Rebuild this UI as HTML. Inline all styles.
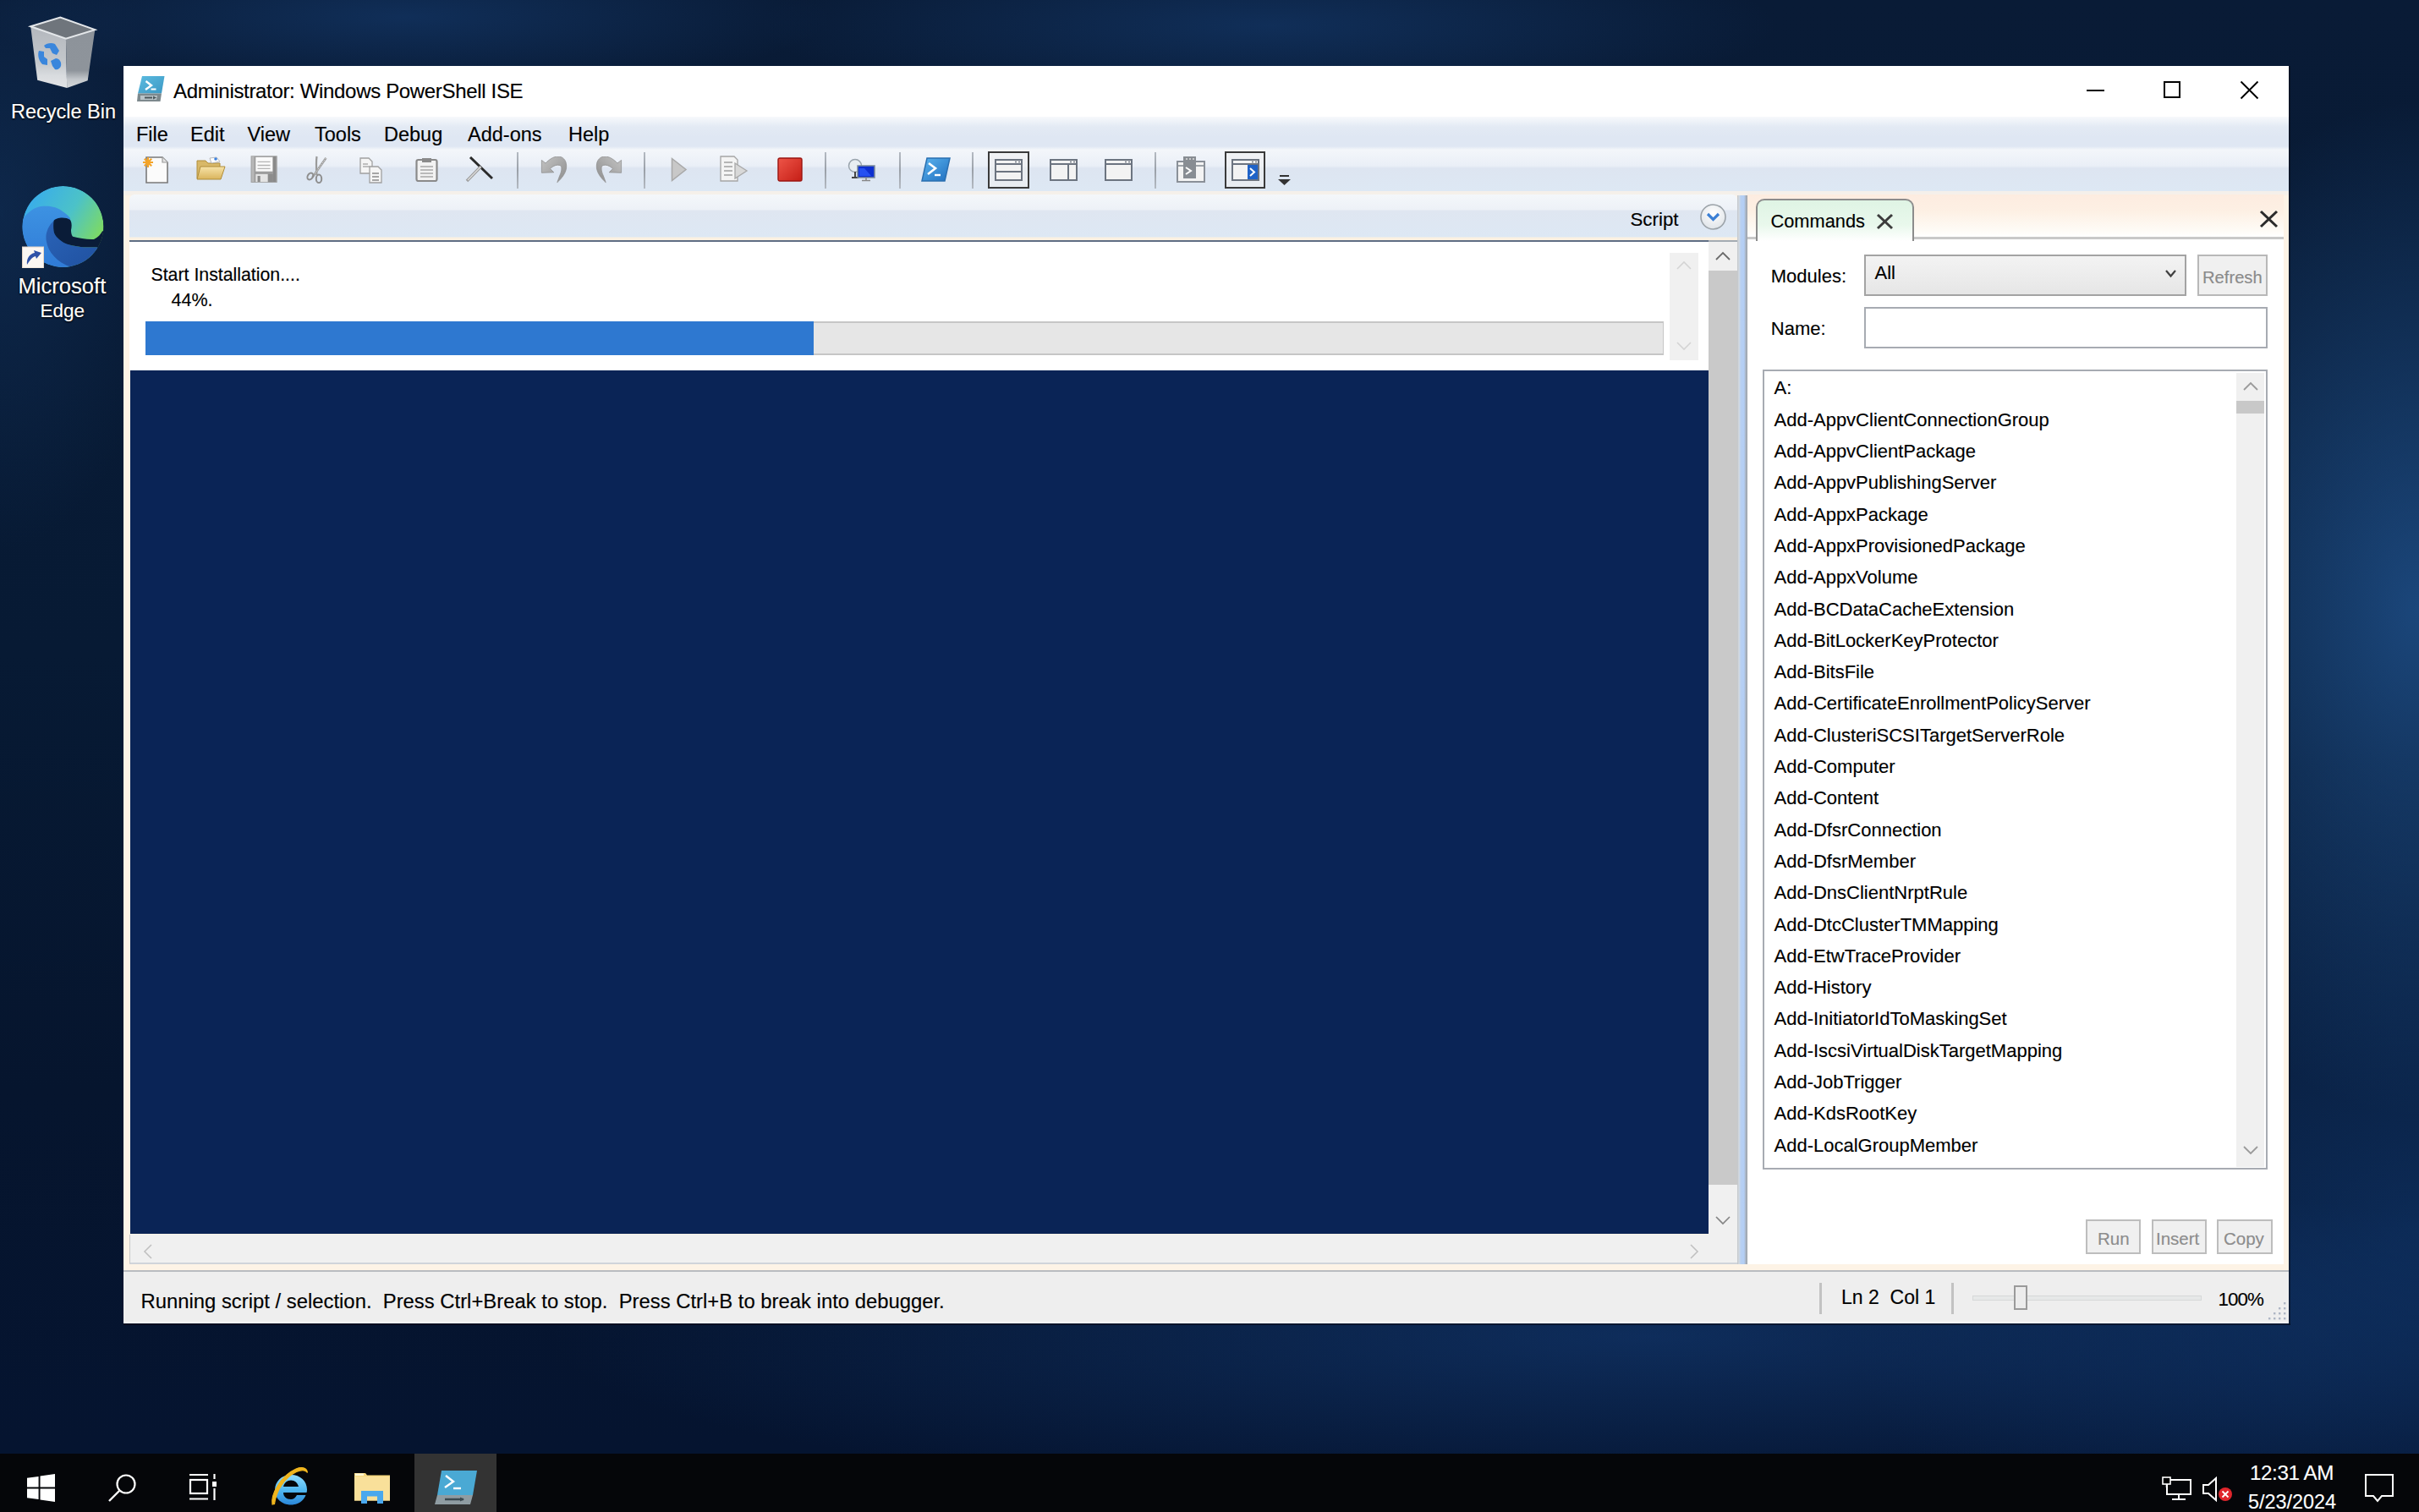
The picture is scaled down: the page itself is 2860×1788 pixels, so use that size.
<!DOCTYPE html>
<html><head><meta charset="utf-8">
<style>
*{margin:0;padding:0;box-sizing:border-box}
html,body{width:2860px;height:1788px;overflow:hidden}
body{position:relative;font-family:"Liberation Sans",sans-serif;background:#0a1e3c}
.a{position:absolute}
.t{position:absolute;white-space:nowrap;color:#000;line-height:1;-webkit-text-stroke:0.15px currentColor}
#bg{left:0;top:0;width:2860px;height:1719px;
background:
radial-gradient(ellipse 380px 600px at 2860px 720px, rgba(40,100,170,0.6), rgba(40,100,170,0) 100%),
radial-gradient(ellipse 700px 550px at 2860px 1450px, rgba(22,75,145,0.4), rgba(22,75,145,0) 100%),
radial-gradient(ellipse 1300px 200px at 1950px 1580px, rgba(25,75,145,0.45), rgba(25,75,145,0) 100%),
radial-gradient(ellipse 500px 90px at 480px 20px, rgba(25,70,130,0.45), rgba(25,70,130,0) 100%),
radial-gradient(ellipse 600px 100px at 1500px 30px, rgba(25,70,130,0.45), rgba(25,70,130,0) 100%),
radial-gradient(ellipse 200px 400px at 0px 250px, rgba(20,55,100,0.45), rgba(20,55,100,0) 100%),
linear-gradient(180deg,#091b36 0%,#071a34 45%,#06152e 75%,#051430 100%)}
#taskbar{left:0;top:1719px;width:2860px;height:69px;background:#050609}
#win{left:146px;top:78px;width:2560px;height:1487px;background:#fdf3e6}
#title{left:146px;top:78px;width:2560px;height:60px;background:#fff}
#menubar{left:146px;top:138px;width:2560px;height:88px;
background:linear-gradient(180deg,#f7f9fc 0px,#e3eaf4 12px,#dfe7f3 24px,#dfe7f3 35px,#f3f6fa 39px,#eaeff7 58px,#dde5f1 61px,#dde8f4 88px)}
#tbband{left:146px;top:226px;width:2560px;height:5px;background:#f5f0ea}
#scripthdr{left:153px;top:230px;width:1901px;height:54px;border-radius:6px 6px 0 0;
background:linear-gradient(180deg,#f4f7fa 0px,#edf1f7 18px,#dfe6f1 19px,#dde8f4 50px,#fbf1e2 51px,#fbf1e2 54px)}
#hdrline{left:153px;top:284px;width:1901px;height:2px;background:linear-gradient(90deg,#5f6e84 0,#5f6e84 1867px,#a4abb3 1867px)}
#editor{left:153px;top:286px;width:1867px;height:152px;background:#fff}
#console{left:154px;top:438px;width:1866px;height:1021px;background:#0a2456}
#vscroll{left:2020px;top:286px;width:34px;height:1175px;background:#f0f0f0}
#vthumb{left:2020px;top:320px;width:34px;height:1081px;background:#c9c9c9}
#hscroll{left:153px;top:1460px;width:1901px;height:35px;background:#f0f0f0;border-left:1px solid #c8c8c8;border-bottom:2px solid #d0d4da}
#splitter{left:2054px;top:231px;width:12px;height:1264px;background:linear-gradient(90deg,#bfc3c8 0,#d6dbe0 2px,#b7d0f2 4px,#b3cef5 8px,#a9b4c2 10px,#9aa0a8 12px)}
#cmdpane{left:2066px;top:231px;width:634px;height:1264px;background:#fff}
#cmdhdr{left:2066px;top:230px;width:634px;height:50px;background:linear-gradient(180deg,#fdece0 0%,#fdf0e4 40%,#fefbf6 85%,#ffffff 100%)}
#status{left:146px;top:1502px;width:2560px;height:63px;background:#eeeeee;border-top:2px solid #b9bcc0}
</style></head><body>
<div id="bg" class="a"></div>
<div id="taskbar" class="a"></div>
<div id="win" class="a"></div>
<div id="title" class="a"></div>
<div id="menubar" class="a"></div>
<div id="tbband" class="a"></div>
<div id="scripthdr" class="a"></div>
<div id="hdrline" class="a"></div>
<div id="editor" class="a"></div>
<div id="console" class="a"></div>
<div id="vscroll" class="a"></div>
<div id="vthumb" class="a"></div>
<div id="hscroll" class="a"></div>
<div id="splitter" class="a"></div>
<div id="cmdpane" class="a"></div>
<div id="cmdhdr" class="a"></div>
<div id="status" class="a"></div>
<svg class="a" style="left:25px;top:10px;" width="100" height="100" viewBox="0 0 100 100">
<defs>
<linearGradient id="rbl" x1="0" y1="0" x2="0" y2="1"><stop offset="0" stop-color="#b3b7bd"/><stop offset="0.6" stop-color="#c4c8cc"/><stop offset="0.8" stop-color="#d9dcdf"/><stop offset="1" stop-color="#e2e4e6"/></linearGradient>
<linearGradient id="rbr" x1="0" y1="0" x2="0" y2="1"><stop offset="0" stop-color="#8d939a"/><stop offset="0.7" stop-color="#8e949b"/><stop offset="0.85" stop-color="#c2c6ca"/><stop offset="1" stop-color="#d4d7da"/></linearGradient>
</defs>
<path d="M11.2,21.2 L52.9,35.7 L54.2,93.9 L19.2,84.7 Z" fill="url(#rbl)"/>
<path d="M52.9,35.7 L87.3,25.1 L78.7,85.3 L54.2,93.9 Z" fill="url(#rbr)"/>
<path d="M11.2,21.2 L46.3,10.6 L87.3,25.1 L52.9,35.7 Z" fill="#6f757c" stroke="#e4e7ea" stroke-width="2"/>
<g fill="#3a86dc">
<path d="M27,44 C30,41 36,40 40,42 L45,50 L42,55 L37,53 L34,47 L29,47 Z"/>
<path d="M21,50 C19,55 21,62 25,66 L31,67 L31,60 L27,57 L27,51 Z"/>
<path d="M35,62 L41,59 C45,59 48,63 47,68 C46,71 43,73 40,72 L37,68 Z"/>
</g>
</svg>
<div class="t" style="left:13.0px;top:120.8px;font-size:23.5px;color:#fff;text-shadow:0 1px 2px #000,0 0 2px #000">Recycle Bin</div>
<svg class="a" style="left:26px;top:220px;" width="97" height="97" viewBox="0 0 97 97">
<defs>
<linearGradient id="eg1" x1="0.1" y1="0.2" x2="0.95" y2="0.7"><stop offset="0" stop-color="#3aaee8"/><stop offset="0.5" stop-color="#4cc2c8"/><stop offset="1" stop-color="#82dc5a"/></linearGradient>
<linearGradient id="eg2" x1="0" y1="0" x2="0" y2="1"><stop offset="0" stop-color="#3d92e2"/><stop offset="1" stop-color="#2f7ad6"/></linearGradient>
<linearGradient id="eg3" x1="0" y1="0" x2="1" y2="1"><stop offset="0" stop-color="#2a64b8"/><stop offset="1" stop-color="#1f4f9e"/></linearGradient>
<clipPath id="ec"><circle cx="48.5" cy="48" r="48"/></clipPath>
</defs>
<g clip-path="url(#ec)">
<circle cx="48.5" cy="48" r="48" fill="url(#eg1)"/>
<path d="M0,39.5 C8,30 16,24 25.3,23.8 C34,23 42,25 48,30 C52,33 55,35 57,38 L57,100 L0,100 Z" fill="url(#eg2)"/>
<path d="M37.6,40.9 C30,48 27,58 29,66 C31,78 42,92 62,97 L100,97 L100,72 L88.5,72.2 C80,72.5 72,72.5 66.7,71.5 C58,70 52,68.5 48.5,66.4 C42,62 38,58 37.5,53 Z" fill="url(#eg3)"/>
<path d="M37.6,40.9 C40,37 52,36 57,40 C59,43 59,48 58,52 C58,55 58.5,58 60,59.8 C68,62 78,63.5 85,63 C90,61 93,57 95.1,53.3 L100,53 L100,80 L88.5,72.2 C80,72.5 72,72.5 66.7,71.5 C58,70 52,68.5 48.5,66.4 C42,62 38,58 37.5,53 C37,49 37,44 37.6,40.9 Z" fill="#0a1c38"/>
</g>
<rect x="0.5" y="72" width="25" height="25" fill="#fbf7f2" stroke="#e6d6c6" stroke-width="1"/>
<path d="M6,93 C5,86 9,80 15,79 L14,76 L23,79 L17,86 L16,83 C12,84 9,88 6,93 Z" fill="#2f52a8"/>
</svg>
<div class="t" style="left:21.5px;top:325.9px;font-size:25.6px;color:#fff;text-shadow:0 1px 2px #000,0 0 2px #000">Microsoft</div>
<div class="t" style="left:47.5px;top:357.4px;font-size:22.5px;color:#fff;text-shadow:0 1px 2px #000,0 0 2px #000">Edge</div>
<div class="a" style="left:490px;top:1719px;width:97px;height:69px;background:#333"></div>
<svg class="a" style="left:32px;top:1743px;" width="33" height="33" viewBox="0 0 34 34"><path d="M0 5 L14 3 L14 16 L0 16Z M16 2.7 L34 0 L34 16 L16 16Z M0 18 L14 18 L14 31 L0 29Z M16 18 L34 18 L34 34 L16 31.3Z" fill="#fff"/></svg>
<svg class="a" style="left:126px;top:1740px;" width="40" height="40" viewBox="0 0 40 40"><circle cx="23" cy="15" r="10.5" fill="none" stroke="#fff" stroke-width="2.2"/><line x1="15.5" y1="22.5" x2="3" y2="35" stroke="#fff" stroke-width="2.4"/></svg>
<svg class="a" style="left:222px;top:1742px;" width="36" height="34" viewBox="0 0 36 34"><path d="M2 2 h22 M2 30.5 h22" stroke="#fff" stroke-width="2.2"/><rect x="3" y="8" width="20" height="16" fill="none" stroke="#fff" stroke-width="2.2"/><rect x="29" y="10" width="5" height="6" fill="#fff"/><path d="M31.5 1v6 M31.5 18v14" stroke="#fff" stroke-width="2.2"/></svg>
<svg class="a" style="left:318px;top:1733px;" width="50" height="50" viewBox="0 0 50 50">
<defs><linearGradient id="ie" x1="0" y1="0" x2="0" y2="1"><stop offset="0" stop-color="#8fdcff"/><stop offset="0.5" stop-color="#52b8f0"/><stop offset="1" stop-color="#2a86d8"/></linearGradient></defs>
<path d="M26 11 C15 11 7 19 7 29 C7 39 15 46.5 26 46.5 C34 46.5 41 42 43.5 35 L33 35 C31.5 38 29 40 26 40 C20.5 40 17 36.5 17 32 L44.5 32 C44.8 31 45 30 45 28.5 C45 18.5 37 11 26 11Z M17 25 C18 20.5 21.5 17.5 26 17.5 C30.5 17.5 34 20.5 35 25Z" fill="url(#ie)"/>
<path d="M4,46 C2,34 14,12 32,4 C38,1.5 44.5,2 45.5,8.5 C43.5,5 38.5,5 32.5,7.5 C18,14.5 8.5,30 6.5,45.5 Z" fill="#f0b51e" stroke="#f0b51e" stroke-width="1.2"/>
</svg>
<svg class="a" style="left:418px;top:1741px;" width="44" height="37" viewBox="0 0 44 37">
<path d="M1 1 h13 l2 2.5 h27 v30 h-42z" fill="#f6d77e"/><path d="M1 5 h42 v28.5 h-42z" fill="#f9e09a"/>
<rect x="2" y="1.5" width="10" height="2.5" fill="#fff7d6"/>
<path d="M9 22 h26 v15 h-7 v-8.5 h-12 v8.5 h-7z" fill="#4aa8ee"/>
</svg>
<svg class="a" style="left:514px;top:1739px;" width="50" height="41" viewBox="0 0 50 41">
<path d="M8 0 L50 0 L45 29 L3 29Z" fill="#4aa9d4"/>
<path d="M13 6 L22 13 L12 20" fill="none" stroke="#fff" stroke-width="2.4"/><path d="M22 21 h9" stroke="#fff" stroke-width="2.4"/>
<path d="M3 29 L45 29 L42 40 L0 40Z" fill="#8f9ca2"/><path d="M12 34 h22" stroke="#3c4a50" stroke-width="2.5"/><path d="M30 31.5 l5 2.5 l-5 2.5z" fill="#3c4a50"/>
</svg>
<svg class="a" style="left:2555px;top:1746px;" width="38" height="30" viewBox="0 0 38 30"><rect x="7" y="4" width="28" height="17" fill="none" stroke="#fff" stroke-width="2"/><path d="M21 21 v6 M13 27 h16" stroke="#fff" stroke-width="2"/><rect x="2" y="1" width="9" height="8" fill="#000" stroke="#fff" stroke-width="1.6"/><path d="M6.5 9 v4" stroke="#fff" stroke-width="1.5"/></svg>
<svg class="a" style="left:2603px;top:1746px;" width="40" height="32" viewBox="0 0 40 32"><path d="M2 10 h6 l9 -8 v26 l-9 -8 h-6z" fill="none" stroke="#fff" stroke-width="2"/><circle cx="28" cy="21" r="8" fill="#e0262c"/><path d="M24.5 17.5 l7 7 M31.5 17.5 l-7 7" stroke="#fff" stroke-width="1.8"/></svg>
<div class="t" style="left:2660.0px;top:1729.5px;font-size:24.2px;color:#fff;letter-spacing:-0.4px">12:31 AM</div>
<div class="t" style="left:2658.0px;top:1765.2px;font-size:23.4px;color:#fff;">5/23/2024</div>
<svg class="a" style="left:2795px;top:1742px;" width="36" height="36" viewBox="0 0 36 36"><path d="M2 2 h32 v25 h-13 l-5 6 l-5 -6 h-9z" fill="none" stroke="#fff" stroke-width="2"/></svg>
<svg class="a" style="left:162px;top:90px;" width="33" height="31" viewBox="0 0 33 31">
<defs><linearGradient id="psb" x1="0" y1="0" x2="1" y2="1"><stop offset="0" stop-color="#5bbbe0"/><stop offset="1" stop-color="#3c98c4"/></linearGradient></defs>
<path d="M6 0 L32.5 0 L29 20.5 L1 20.5Z" fill="url(#psb)"/>
<path d="M10.5 6 L17 11 L10 16" fill="none" stroke="#fff" stroke-width="2.4"/><path d="M16.5 15.5 h6" stroke="#fff" stroke-width="2"/>
<path d="M1 20.5 L29 20.5 L27.5 30 L0 30Z" fill="#7d898d"/><path d="M4 23 h20 l-1 5 h-19z" fill="#b9c4c9"/>
<path d="M9 25.5 h9" stroke="#4a565a" stroke-width="2"/><path d="M19 23.5 l4 2 l-4 2z" fill="#4a565a"/>
</svg>
<div class="t" style="left:205.0px;top:95.7px;font-size:24px;color:#000;letter-spacing:-0.33px">Administrator: Windows PowerShell ISE</div>
<div class="a" style="left:2467px;top:106px;width:21px;height:2px;background:#000"></div>
<div class="a" style="left:2558px;top:96px;width:20px;height:20px;border:2px solid #000"></div>
<svg class="a" style="left:2648px;top:95px;" width="23" height="23" viewBox="0 0 23 23"><path d="M1.5 1.5 L21.5 21.5 M21.5 1.5 L1.5 21.5" stroke="#000" stroke-width="1.9"/></svg>
<div class="t" style="left:161.0px;top:148.1px;font-size:23.5px;color:#000;">File</div>
<div class="t" style="left:225.0px;top:148.1px;font-size:23.5px;color:#000;">Edit</div>
<div class="t" style="left:292.5px;top:148.1px;font-size:23.5px;color:#000;">View</div>
<div class="t" style="left:372.0px;top:148.1px;font-size:23.5px;color:#000;">Tools</div>
<div class="t" style="left:454.0px;top:148.1px;font-size:23.5px;color:#000;">Debug</div>
<div class="t" style="left:553.0px;top:148.1px;font-size:23.5px;color:#000;">Add-ons</div>
<div class="t" style="left:672.0px;top:148.1px;font-size:23.5px;color:#000;">Help</div>
<div class="a" style="left:611px;top:180px;width:2px;height:43px;background:linear-gradient(180deg,#b4bac2,#9aa0a8 50%,#b4bac2)"></div>
<div class="a" style="left:761px;top:180px;width:2px;height:43px;background:linear-gradient(180deg,#b4bac2,#9aa0a8 50%,#b4bac2)"></div>
<div class="a" style="left:975px;top:180px;width:2px;height:43px;background:linear-gradient(180deg,#b4bac2,#9aa0a8 50%,#b4bac2)"></div>
<div class="a" style="left:1063px;top:180px;width:2px;height:43px;background:linear-gradient(180deg,#b4bac2,#9aa0a8 50%,#b4bac2)"></div>
<div class="a" style="left:1149px;top:180px;width:2px;height:43px;background:linear-gradient(180deg,#b4bac2,#9aa0a8 50%,#b4bac2)"></div>
<div class="a" style="left:1365px;top:180px;width:2px;height:43px;background:linear-gradient(180deg,#b4bac2,#9aa0a8 50%,#b4bac2)"></div>
<svg class="a" style="left:166px;top:184px;" width="34" height="34" viewBox="0 0 34 34">
<path d="M7 2 h19 l6 6 v24 h-25z" fill="#fbfbfb" stroke="#7a7a7a" stroke-width="1.6"/><path d="M26 2 v6 h6" fill="#e5e5e5" stroke="#9a9a9a" stroke-width="1.2"/>
<g stroke="#f4a428" stroke-width="2.2"><path d="M9 2 v12 M3 8 h12 M4.8 3.8 l8.4 8.4 M13.2 3.8 l-8.4 8.4"/></g>
</svg>
<svg class="a" style="left:231px;top:185px;" width="36" height="29" viewBox="0 0 36 29">
<defs><linearGradient id="fo" x1="0" y1="0" x2="0" y2="1"><stop offset="0" stop-color="#f7e3a8"/><stop offset="1" stop-color="#d9b45c"/></linearGradient></defs>
<path d="M2 5 h10 l3 3 h14 v18 h-27z" fill="#d8b868" stroke="#b08d3a" stroke-width="1"/>
<path d="M17 2 l8 -1 l4 5 l-10 2z" fill="#fff" stroke="#aaa" stroke-width="0.8"/><circle cx="24" cy="3" r="1.8" fill="#3a80e0"/>
<path d="M6 12 h29 l-5 15 h-28z" fill="url(#fo)" stroke="#b08d3a" stroke-width="1"/>
</svg>
<svg class="a" style="left:296px;top:184px;" width="33" height="33" viewBox="0 0 33 33">
<rect x="0.6" y="0.3" width="31.1" height="31.6" fill="#9c9c9c"/><rect x="1.5" y="1" width="3" height="30" fill="#b8b8b8"/><rect x="27" y="1" width="3" height="30" fill="#8a8a8a"/>
<rect x="6.3" y="1.9" width="20" height="16.8" fill="#fafafa"/>
<path d="M8.5 7.4 h15 M8.5 11.5 h15 M8.5 15.3 h15" stroke="#b4b4b4" stroke-width="1.3"/>
<rect x="6.3" y="21.9" width="14.5" height="9.2" fill="#e4e4e4"/><rect x="8.5" y="24" width="3.2" height="7" fill="#8a8a8a"/><rect x="20.8" y="21.9" width="6" height="9.2" fill="#8c8c8c"/>
</svg>
<svg class="a" style="left:362px;top:184px;" width="27" height="33" viewBox="0 0 27 33">
<path d="M12.5 1 C11.5 8 12 16 12.5 23" stroke="#9a9a9a" stroke-width="2.2" fill="none"/><path d="M23.5 2.8 L7.5 25.5" stroke="#a0a0a0" stroke-width="2.6" fill="none"/>
<path d="M23.5 2.8 L10 22" stroke="#e8e8e8" stroke-width="0.8" stroke-dasharray="1.5 1.5" fill="none"/>
<ellipse cx="4.8" cy="24.5" rx="3" ry="4.3" transform="rotate(30 4.8 24.5)" fill="none" stroke="#8e8e8e" stroke-width="2"/><ellipse cx="15" cy="27.4" rx="3.2" ry="4.8" fill="none" stroke="#8e8e8e" stroke-width="2"/>
</svg>
<svg class="a" style="left:425px;top:186px;" width="28" height="31" viewBox="0 0 28 31">
<path d="M1 1 h10 l4 4 v14 h-14z" fill="#f5f5f5" stroke="#a0a0a0" stroke-width="1.3"/><path d="M4 8 h6 M4 11 h8" stroke="#8a8a8a" stroke-width="1.2"/>
<path d="M12 11 h10 l4 4 v15 h-14z" fill="#f5f5f5" stroke="#a0a0a0" stroke-width="1.3"/><path d="M15 19 h8 M15 23 h8 M15 27 h8" stroke="#8a8a8a" stroke-width="1.3"/>
</svg>
<svg class="a" style="left:491px;top:186px;" width="27" height="29" viewBox="0 0 27 29">
<rect x="1.5" y="3" width="24" height="25" rx="2" fill="#f2f2f2" stroke="#8a8a8a" stroke-width="2.2"/><rect x="8" y="1" width="11" height="5" fill="#8a8a8a"/>
<path d="M6 11 h15 M6 15 h15 M6 19 h15 M6 23 h15" stroke="#a8a8a8" stroke-width="1.3"/>
</svg>
<svg class="a" style="left:550px;top:185px;" width="33" height="31" viewBox="0 0 33 31">
<path d="M6 1 L32 26" stroke="#2a2a2a" stroke-width="3"/><path d="M18.5 12 L2 29" stroke="#9a9a9a" stroke-width="3.4"/><path d="M18.5 12 L3 28" stroke="#e0e0e0" stroke-width="1.2"/>
</svg>
<svg class="a" style="left:639px;top:185px;" width="33" height="32" viewBox="0 0 33 32"><defs><linearGradient id="ug" x1="0" y1="0" x2="1" y2="1"><stop offset="0" stop-color="#c4c4c4"/><stop offset="1" stop-color="#8c8c8c"/></linearGradient></defs><path d="M1.4,4.4 L1.4,19.3 L15.8,18.8 L11.5,14.5 C15,11 20,9 23.7,10.9 C25.5,12 25.5,17 22.7,22.8 L19.8,30.7 C25,26 31,19 30.7,11 C30.5,4 26,0 21,0 C15,0 10,4 6,8 Z" fill="url(#ug)" stroke="#8f8f8f" stroke-width="0.8"/></svg>
<svg class="a" style="left:703px;top:185px;" width="33" height="32" viewBox="0 0 33 32"><g transform="translate(33,0) scale(-1,1)"><defs><linearGradient id="ug2" x1="0" y1="0" x2="1" y2="1"><stop offset="0" stop-color="#c4c4c4"/><stop offset="1" stop-color="#8c8c8c"/></linearGradient></defs><path d="M1.4,4.4 L1.4,19.3 L15.8,18.8 L11.5,14.5 C15,11 20,9 23.7,10.9 C25.5,12 25.5,17 22.7,22.8 L19.8,30.7 C25,26 31,19 30.7,11 C30.5,4 26,0 21,0 C15,0 10,4 6,8 Z" fill="url(#ug2)" stroke="#8f8f8f" stroke-width="0.8"/></g></svg>
<svg class="a" style="left:793px;top:186px;" width="20" height="29" viewBox="0 0 20 29"><path d="M1.5 1.5 L18 14.5 L1.5 27.5Z" fill="#c8c8c8" stroke="#a8a8a8" stroke-width="1.5"/></svg>
<svg class="a" style="left:851px;top:184px;" width="34" height="31" viewBox="0 0 34 31">
<path d="M1 1 h16 l4 4 v25 h-20z" fill="#f4f4f4" stroke="#a5a5a5" stroke-width="1.3"/>
<path d="M5 8 h10 M5 13 h10 M5 18 h10 M5 23 h10" stroke="#a0a0a0" stroke-width="1.3"/>
<path d="M18 9 L32 18 L18 27Z" fill="#d8d8d8" stroke="#a8a8a8" stroke-width="1.3"/>
</svg>
<svg class="a" style="left:919px;top:186px;" width="30" height="29" viewBox="0 0 30 29"><defs><linearGradient id="st" x1="0" y1="0" x2="1" y2="1"><stop offset="0" stop-color="#ee5548"/><stop offset="1" stop-color="#c51e16"/></linearGradient></defs><rect x="1" y="1" width="28" height="27" rx="2" fill="url(#st)" stroke="#9a1510" stroke-width="1.4"/></svg>
<svg class="a" style="left:1002px;top:187px;" width="33" height="28" viewBox="0 0 33 28">
<circle cx="9" cy="9" r="7.5" fill="#e8eef2" stroke="#9aa4ad" stroke-width="1.5"/>
<path d="M9 16 v7 M5 23 h8" stroke="#444" stroke-width="2"/>
<rect x="12" y="9" width="20" height="14" fill="#0d2fd0" stroke="#7a8a9a" stroke-width="1.5"/><path d="M14 12 l6 0 l8 9 h-14z" fill="#3060ff" opacity="0.7"/>
<path d="M22 23 v3 M17 26.5 h10" stroke="#888" stroke-width="1.6"/>
</svg>
<svg class="a" style="left:1089px;top:186px;" width="35" height="29" viewBox="0 0 35 29">
<defs><linearGradient id="ps2" x1="0" y1="0" x2="1" y2="1"><stop offset="0" stop-color="#5cb4ee"/><stop offset="1" stop-color="#1f6fc0"/></linearGradient></defs>
<path d="M7 1 h27 l-6 27 h-27z" fill="url(#ps2)" stroke="#2a6fb0" stroke-width="1.5"/>
<path d="M9 7 L17 13 L8 20" fill="none" stroke="#fff" stroke-width="2.6"/><path d="M16 21 h7" stroke="#fff" stroke-width="2.4"/>
</svg>
<div class="a" style="left:1168px;top:179px;width:49px;height:44px;border:2px solid #3a3a3a;background:rgba(240,240,240,0.6)"></div>
<svg class="a" style="left:1176px;top:188px;" width="33" height="26" viewBox="0 0 33 26"><rect x="1" y="1" width="31" height="24" fill="#f3f3f3" stroke="#6c7480" stroke-width="2"/><path d="M1 6 h31" stroke="#6c7480" stroke-width="2"/><path d="M24 3.5 h2 M28 3.5 h2" stroke="#6c7480" stroke-width="1.6"/><path d="M1 15 h31" stroke="#6c7480" stroke-width="2"/></svg>
<svg class="a" style="left:1241px;top:188px;" width="33" height="26" viewBox="0 0 33 26"><rect x="1" y="1" width="31" height="24" fill="#f3f3f3" stroke="#6c7480" stroke-width="2"/><path d="M1 6 h31" stroke="#6c7480" stroke-width="2"/><path d="M24 3.5 h2 M28 3.5 h2" stroke="#6c7480" stroke-width="1.6"/><path d="M22 6 v19" stroke="#6c7480" stroke-width="2"/></svg>
<svg class="a" style="left:1306px;top:188px;" width="33" height="26" viewBox="0 0 33 26"><rect x="1" y="1" width="31" height="24" fill="#f3f3f3" stroke="#6c7480" stroke-width="2"/><path d="M1 6 h31" stroke="#6c7480" stroke-width="2"/><path d="M24 3.5 h2 M28 3.5 h2" stroke="#6c7480" stroke-width="1.6"/></svg>
<svg class="a" style="left:1391px;top:184px;" width="34" height="33" viewBox="0 0 34 33">
<rect x="1" y="7" width="32" height="24" fill="#f3f3f3" stroke="#8a9098" stroke-width="2"/><path d="M1 12 h32" stroke="#8a9098" stroke-width="1.6"/>
<rect x="8" y="1" width="15" height="26" fill="#888d93"/><path d="M11 4 h2 M15 4 h2 M19 4 h2" stroke="#ddd" stroke-width="1.4"/>
<path d="M11 14 L17 18 L11 22" fill="none" stroke="#fff" stroke-width="2"/>
</svg>
<div class="a" style="left:1448px;top:179px;width:48px;height:44px;border:2px solid #3a3a3a;background:rgba(240,240,240,0.6)"></div>
<svg class="a" style="left:1456px;top:188px;" width="33" height="27" viewBox="0 0 33 27">
<rect x="1" y="1" width="31" height="24" fill="#f3f3f3" stroke="#6c7480" stroke-width="2"/><path d="M1 6 h31" stroke="#6c7480" stroke-width="2"/><path d="M24 3.5 h2 M28 3.5 h2" stroke="#6c7480" stroke-width="1.6"/>
<rect x="19" y="7" width="12" height="17" fill="#1f63c8"/><path d="M22 11 L27 15.5 L22 20" fill="none" stroke="#fff" stroke-width="2"/>
</svg>
<svg class="a" style="left:1510px;top:206px;" width="17" height="14" viewBox="0 0 17 14"><path d="M3 2 h11" stroke="#333" stroke-width="2"/><path d="M1 6 h15 l-7.5 7z" fill="#333"/></svg>
<div class="t" style="left:1927.5px;top:248.6px;font-size:22.3px;color:#000;">Script</div>
<svg class="a" style="left:2009px;top:240px;" width="33" height="33" viewBox="0 0 33 33">
<defs><radialGradient id="cg" cx="0.5" cy="0.35" r="0.6"><stop offset="0" stop-color="#ffffff"/><stop offset="1" stop-color="#e2e6ea"/></radialGradient></defs>
<circle cx="16.5" cy="16.5" r="14.5" fill="url(#cg)" stroke="#9ba2a8" stroke-width="1.6"/>
<path d="M10 13 L16.5 19.5 L23 13" fill="none" stroke="#3b7fd4" stroke-width="3.2"/>
</svg>
<div class="t" style="left:178.5px;top:314.7px;font-size:21.3px;color:#000;">Start Installation....</div>
<div class="t" style="left:202.5px;top:344.8px;font-size:21.5px;color:#000;">44%.</div>
<div class="a" style="left:172px;top:380px;width:790px;height:40px;background:#2e78d0"></div>
<div class="a" style="left:962px;top:380px;width:1005px;height:40px;background:#e6e6e6;border-top:2px solid #c6c6c6;border-bottom:2px solid #c6c6c6;border-right:1px solid #c6c6c6"></div>
<div class="a" style="left:1974px;top:299px;width:34px;height:127px;background:#f0f0f0"></div>
<svg class="a" style="left:1980px;top:307px;" width="22" height="14" viewBox="0 0 22 14"><path d="M3 11 L11 3 L19 11" fill="none" stroke="#d4d4d4" stroke-width="1.6"/></svg>
<svg class="a" style="left:1980px;top:402px;" width="22" height="14" viewBox="0 0 22 14"><path d="M3 3 L11 11 L19 3" fill="none" stroke="#d4d4d4" stroke-width="1.6"/></svg>
<svg class="a" style="left:2026px;top:296px;" width="22" height="14" viewBox="0 0 22 14"><path d="M3 11 L11 3 L19 11" fill="none" stroke="#6a6a6a" stroke-width="1.8"/></svg>
<svg class="a" style="left:2026px;top:1436px;" width="22" height="14" viewBox="0 0 22 14"><path d="M3 3 L11 11 L19 3" fill="none" stroke="#858585" stroke-width="1.7"/></svg>
<svg class="a" style="left:168px;top:1469px;" width="14" height="22" viewBox="0 0 14 22"><path d="M11 3 L3 11 L11 19" fill="none" stroke="#c0c0c0" stroke-width="1.6"/></svg>
<svg class="a" style="left:1996px;top:1469px;" width="14" height="22" viewBox="0 0 14 22"><path d="M3 3 L11 11 L3 19" fill="none" stroke="#c0c0c0" stroke-width="1.6"/></svg>
<div class="a" style="left:2066px;top:280px;width:634px;height:3px;background:#c8c8c8"></div>
<div class="a" style="left:2076px;top:235px;width:187px;height:50px;border:2px solid #8c8c8c;border-bottom:none;border-radius:10px 10px 0 0;background:linear-gradient(180deg,#dff4e4 0%,#e9f8ec 60%,#ffffff 100%)"></div>
<div class="t" style="left:2093.5px;top:250.8px;font-size:21.8px;color:#000;">Commands</div>
<svg class="a" style="left:2218px;top:252px;" width="21" height="20" viewBox="0 0 21 20"><path d="M2 2 L19 18 M19 2 L2 18" stroke="#3c3c3c" stroke-width="3"/></svg>
<svg class="a" style="left:2671px;top:248px;" width="23" height="22" viewBox="0 0 23 22"><path d="M2 2 L21 20 M21 2 L2 20" stroke="#2b2b2b" stroke-width="3"/></svg>
<div class="t" style="left:2093.8px;top:316.4px;font-size:22px;color:#000;">Modules:</div>
<div class="t" style="left:2093.8px;top:378.4px;font-size:22px;color:#000;">Name:</div>
<div class="a" style="left:2204px;top:301px;width:381px;height:49px;border:2px solid #a3a3a3;background:linear-gradient(180deg,#f3f3f3,#e6e6e6)"></div>
<div class="t" style="left:2216.5px;top:312.4px;font-size:22px;color:#000;">All</div>
<svg class="a" style="left:2559px;top:317px;" width="15" height="13" viewBox="0 0 15 13"><path d="M2 3 L7.5 9.5 L13 3" fill="none" stroke="#404040" stroke-width="2.2"/></svg>
<div class="a" style="left:2598px;top:301px;width:83px;height:49px;border:2px solid #b8b8b8;background:#f0f0f0"></div>
<div class="t" style="left:2604.0px;top:318.2px;font-size:20.2px;color:#8a8a8a;">Refresh</div>
<div class="a" style="left:2204px;top:363px;width:477px;height:49px;border:2px solid #a7abb2;background:#fff"></div>
<div class="a" style="left:2084px;top:437px;width:597px;height:946px;border:2px solid #a7abb2;background:#fff"></div>
<div class="a" style="left:2644px;top:441px;width:33px;height:939px;background:#f0f0f0"></div>
<div class="a" style="left:2644px;top:474px;width:33px;height:15px;background:#c8c8c8"></div>
<svg class="a" style="left:2650px;top:450px;" width="22" height="14" viewBox="0 0 22 14"><path d="M3 11 L11 3 L19 11" fill="none" stroke="#9a9a9a" stroke-width="1.8"/></svg>
<svg class="a" style="left:2650px;top:1353px;" width="22" height="14" viewBox="0 0 22 14"><path d="M3 3 L11 11 L19 3" fill="none" stroke="#9a9a9a" stroke-width="1.8"/></svg>
<div class="t" style="left:2097.5px;top:448.4px;font-size:22px;color:#000;">A:</div>
<div class="t" style="left:2097.5px;top:485.7px;font-size:22px;color:#000;">Add-AppvClientConnectionGroup</div>
<div class="t" style="left:2097.5px;top:523.0px;font-size:22px;color:#000;">Add-AppvClientPackage</div>
<div class="t" style="left:2097.5px;top:560.3px;font-size:22px;color:#000;">Add-AppvPublishingServer</div>
<div class="t" style="left:2097.5px;top:597.6px;font-size:22px;color:#000;">Add-AppxPackage</div>
<div class="t" style="left:2097.5px;top:634.9px;font-size:22px;color:#000;">Add-AppxProvisionedPackage</div>
<div class="t" style="left:2097.5px;top:672.2px;font-size:22px;color:#000;">Add-AppxVolume</div>
<div class="t" style="left:2097.5px;top:709.5px;font-size:22px;color:#000;">Add-BCDataCacheExtension</div>
<div class="t" style="left:2097.5px;top:746.8px;font-size:22px;color:#000;">Add-BitLockerKeyProtector</div>
<div class="t" style="left:2097.5px;top:784.1px;font-size:22px;color:#000;">Add-BitsFile</div>
<div class="t" style="left:2097.5px;top:821.4px;font-size:22px;color:#000;">Add-CertificateEnrollmentPolicyServer</div>
<div class="t" style="left:2097.5px;top:858.7px;font-size:22px;color:#000;">Add-ClusteriSCSITargetServerRole</div>
<div class="t" style="left:2097.5px;top:896.0px;font-size:22px;color:#000;">Add-Computer</div>
<div class="t" style="left:2097.5px;top:933.3px;font-size:22px;color:#000;">Add-Content</div>
<div class="t" style="left:2097.5px;top:970.6px;font-size:22px;color:#000;">Add-DfsrConnection</div>
<div class="t" style="left:2097.5px;top:1007.9px;font-size:22px;color:#000;">Add-DfsrMember</div>
<div class="t" style="left:2097.5px;top:1045.2px;font-size:22px;color:#000;">Add-DnsClientNrptRule</div>
<div class="t" style="left:2097.5px;top:1082.5px;font-size:22px;color:#000;">Add-DtcClusterTMMapping</div>
<div class="t" style="left:2097.5px;top:1119.8px;font-size:22px;color:#000;">Add-EtwTraceProvider</div>
<div class="t" style="left:2097.5px;top:1157.1px;font-size:22px;color:#000;">Add-History</div>
<div class="t" style="left:2097.5px;top:1194.4px;font-size:22px;color:#000;">Add-InitiatorIdToMaskingSet</div>
<div class="t" style="left:2097.5px;top:1231.7px;font-size:22px;color:#000;">Add-IscsiVirtualDiskTargetMapping</div>
<div class="t" style="left:2097.5px;top:1269.0px;font-size:22px;color:#000;">Add-JobTrigger</div>
<div class="t" style="left:2097.5px;top:1306.3px;font-size:22px;color:#000;">Add-KdsRootKey</div>
<div class="t" style="left:2097.5px;top:1343.6px;font-size:22px;color:#000;">Add-LocalGroupMember</div>
<div class="a" style="left:2466px;top:1442px;width:65px;height:41px;border:2px solid #bdbdbd;background:#f0f0f0"></div>
<div class="t" style="left:2480.0px;top:1454.6px;font-size:20.5px;color:#8c8c8c;">Run</div>
<div class="a" style="left:2544px;top:1442px;width:65px;height:41px;border:2px solid #bdbdbd;background:#f0f0f0"></div>
<div class="t" style="left:2549.0px;top:1454.6px;font-size:20.5px;color:#8c8c8c;">Insert</div>
<div class="a" style="left:2621px;top:1442px;width:66px;height:41px;border:2px solid #bdbdbd;background:#f0f0f0"></div>
<div class="t" style="left:2629.0px;top:1454.6px;font-size:20.5px;color:#8c8c8c;">Copy</div>
<div class="t" style="left:166.5px;top:1526.8px;font-size:23.85px;color:#000;">Running script / selection.&nbsp; Press Ctrl+Break to stop.&nbsp; Press Ctrl+B to break into debugger.</div>
<div class="a" style="left:2151px;top:1517px;width:3px;height:37px;background:#c2c2c2"></div>
<div class="a" style="left:2307px;top:1517px;width:3px;height:37px;background:#c2c2c2"></div>
<div class="t" style="left:2177.0px;top:1523.0px;font-size:23px;color:#000;">Ln 2&nbsp; Col 1</div>
<div class="a" style="left:2332px;top:1532px;width:271px;height:6px;background:#e6e8e8;border:1px solid #d6d8d8"></div>
<div class="a" style="left:2381px;top:1520px;width:16px;height:29px;border:2px solid #9a9a9a;background:#ececec"></div>
<div class="t" style="left:2622.5px;top:1526.1px;font-size:22.3px;color:#000;letter-spacing:-0.9px">100%</div>
<svg class="a" style="left:2680px;top:1538px;" width="24" height="24" viewBox="0 0 24 24"><g fill="#aeb6c4"><rect x="20" y="2" width="2.4" height="2.4"/><rect x="14" y="8" width="2.4" height="2.4"/><rect x="20" y="8" width="2.4" height="2.4"/><rect x="8" y="14" width="2.4" height="2.4"/><rect x="14" y="14" width="2.4" height="2.4"/><rect x="20" y="14" width="2.4" height="2.4"/><rect x="2" y="20" width="2.4" height="2.4"/><rect x="8" y="20" width="2.4" height="2.4"/><rect x="14" y="20" width="2.4" height="2.4"/><rect x="20" y="20" width="2.4" height="2.4"/></g></svg>
<div class="a" style="left:146px;top:1563px;width:2560px;height:2px;background:#fbfbfb"></div>
<div class="a" style="left:146px;top:1565px;width:2562px;height:2px;background:rgba(5,10,20,0.55)"></div>
<div class="a" style="left:2706px;top:78px;width:2px;height:1489px;background:rgba(5,10,20,0.45)"></div>

</body></html>
